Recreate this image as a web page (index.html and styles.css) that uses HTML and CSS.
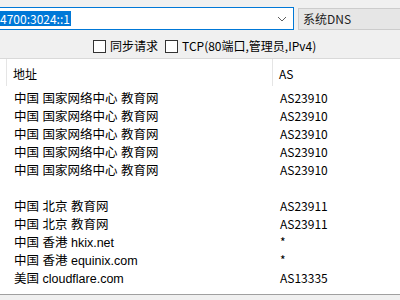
FILE: index.html
```html
<!DOCTYPE html>
<html lang="zh-CN">
<head>
  <meta charset="UTF-8" />
  <title>DNS 查询</title>
  <link rel="stylesheet" href="styles.css">
</head>
<body>
  <div class="top">
    <div class="combo">
      <span class="sel">4700:3024::1</span>
      <svg class="arrow" width="10" height="6" viewBox="0 0 10 6"><path d="M1 1 L5 5 L9 1" fill="none" stroke="#606060" stroke-width="1"/></svg>
    </div>
    <div class="dns">系统DNS</div>
  </div>

  <div class="opts">
    <label class="chk"><span class="box"></span>同步请求</label>
    <label class="chk"><span class="box"></span>TCP(80端口,管理员,IPv4)</label>
  </div>

  <div class="list">
    <div class="head">
      <div class="hc first"></div>
      <div class="hc addr">地址</div>
      <div class="hc as">AS</div>
    </div>
    <div class="rows" id="rows"></div>
  </div>

  <script>
    const results = [
      ["中国 国家网络中心 教育网", "AS23910"],
      ["中国 国家网络中心 教育网", "AS23910"],
      ["中国 国家网络中心 教育网", "AS23910"],
      ["中国 国家网络中心 教育网", "AS23910"],
      ["中国 国家网络中心 教育网", "AS23910"],
      ["", ""],
      ["中国 北京 教育网", "AS23911"],
      ["中国 北京 教育网", "AS23911"],
      ["中国 香港 hkix.net", "*"],
      ["中国 香港 equinix.com", "*"],
      ["美国 cloudflare.com", "AS13335"]
    ];

    const rows = document.getElementById("rows");
    results.forEach(r => {
      const row = document.createElement("div");
      row.className = "row";
      row.innerHTML = `<span class="c-addr">${r[0]}</span><span class="c-as">${r[1]}</span>`;
      rows.appendChild(row);
    });
  </script>
</body>
</html>
```

FILE: styles.css
```css
body {
  margin: 0;
  width: 400px;
  height: 300px;
  overflow: hidden;
  background: #f0f0f0;
  font-family: "Noto Sans CJK SC", "Noto Sans", sans-serif;
  font-size: 12px;
  color: #000;
}
.top {
  display: flex;
  margin-top: 7px;
  height: 23px;
}
.combo {
  width: 293px;
  height: 21px;
  margin-left: -1px;
  border: 1px solid #0078d7;
  background: white;
  display: flex;
  align-items: center;
  position: relative;
}
.sel {
  background: #0078d7;
  color: white;
  line-height: 15px;
  height: 15px;
  padding-right: 1px;
}
.arrow {
  position: absolute;
  right: 6px;
  top: 8px;
}
.dns {
  flex: 1;
  margin-left: 4px;
  margin-top: 1px;
  height: 20px;
  line-height: 20px;
  border: 1px solid #cccccc;
  border-right: none;
  background: #e6e6e6;
  padding-left: 4px;
  color: #222;
}
.opts {
  display: flex;
  gap: 7px;
  padding-left: 93px;
  margin-top: 9px;
  height: 14px;
}
.chk {
  display: flex;
  align-items: center;
  gap: 4px;
  line-height: 14px;
}
.box {
  width: 11px;
  height: 11px;
  border: 1px solid #333;
  background: white;
}
.list {
  margin-top: 5px;
  height: 235px;
  background: white;
  border-top: 1px solid #d9d9d9;
  border-bottom: 1px solid #a0a0a0;
}
.head {
  display: flex;
  height: 30px;
}
.hc {
  line-height: 30px;
  border-right: 1px solid #e5e5e5;
  height: 27px;
}
.hc.first {
  width: 6px;
}
.hc.addr {
  width: 259px;
  padding-left: 6px;
}
.hc.as {
  border-right: none;
  padding-left: 6px;
}
.row {
  display: flex;
  align-items: baseline;
  height: 18px;
  line-height: 18px;
  font-size: 13px;
}
.c-addr {
  width: 266px;
  padding-left: 14px;
  font-family: "Liberation Sans", "Noto Sans CJK SC", sans-serif;
  font-size: 12.5px;
}
.c-as {
  font-size: 12px;
}
```
